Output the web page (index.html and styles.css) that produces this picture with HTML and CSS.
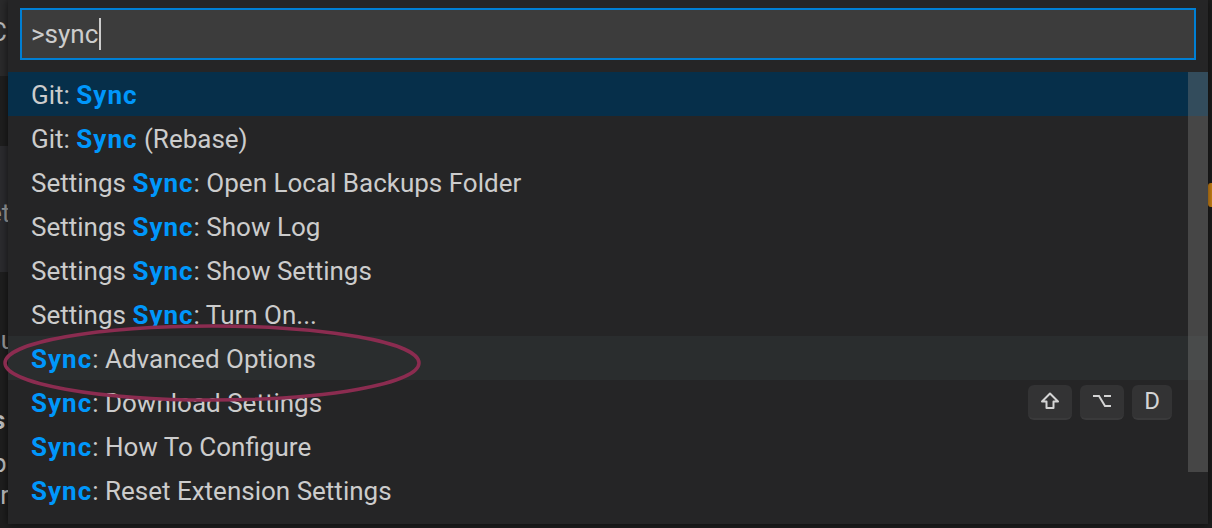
FILE: index.html
```html
<!DOCTYPE html>
<html>
<head>
<meta charset="utf-8">
<link rel="stylesheet" href="styles.css">
</head>
<body>
<div class="editor">
  <div class="side-top"></div>
  <div class="side-panel"></div>
  <div class="frag frag-c">C</div>
  <div class="frag frag-et">et</div>
  <div class="frag frag-ou">ou</div>
  <div class="frag frag-s">s</div>
  <div class="frag frag-p">p</div>
  <div class="frag frag-ir">ir</div>
  <div class="right-strip"><div class="orange"></div></div>
</div>

<div class="quick-pick">
  <div class="input-wrap">
    <div class="input"><span class="value">&gt;sync</span><span class="caret"></span></div>
  </div>
  <div class="list">
    <div class="row selected"><span>Git: <b>Sync</b></span></div>
    <div class="row"><span>Git: <b>Sync</b> (Rebase)</span></div>
    <div class="row"><span>Settings <b>Sync</b>: Open Local Backups Folder</span></div>
    <div class="row"><span>Settings <b>Sync</b>: Show Log</span></div>
    <div class="row"><span>Settings <b>Sync</b>: Show Settings</span></div>
    <div class="row"><span>Settings <b>Sync</b>: Turn On...</span></div>
    <div class="row hover"><span><b>Sync</b>: Advanced Options</span></div>
    <div class="row"><span><b>Sync</b>: Download Settings</span>
      <div class="keys"><kbd class="key"><svg width="20" height="18" viewBox="0 0 20 18"><path d="M10 1.5 L18 9.5 H13.5 V16 H6.5 V9.5 H2 Z" fill="none" stroke="#d4d4d4" stroke-width="2" stroke-linejoin="round"/></svg></kbd><kbd class="key"><svg width="20" height="14" viewBox="0 0 20 14"><path d="M1 2 H7 L13 12 H19 M12 2 H19" fill="none" stroke="#d4d4d4" stroke-width="2"/></svg></kbd><kbd class="key">D</kbd></div>
    </div>
    <div class="row"><span><b>Sync</b>: How To Configure</span></div>
    <div class="row"><span><b>Sync</b>: Reset Extension Settings</span></div>
  </div>
  <div class="scrollbar"></div>
  <svg class="annotation" width="424" height="84" viewBox="0 0 424 84"><ellipse cx="211" cy="40" rx="207" ry="37" fill="none" stroke="#8b2c50" stroke-width="3.5"/></svg>
</div>
</body>
</html>
```

FILE: styles.css
```css
* { box-sizing: border-box; }
html, body {
  margin: 0;
  padding: 0;
  width: 1212px;
  height: 528px;
  overflow: hidden;
  background: #1e1e1e;
  font-family: Roboto, "Noto Sans", sans-serif;
}
.editor {
  position: relative;
  width: 1212px;
  height: 528px;
  background: #1e1e1e;
}
.side-top {
  position: absolute;
  left: 0; top: 0;
  width: 8px; height: 76px;
  background: #2a2a2b;
}
.side-panel {
  position: absolute;
  left: 0; top: 146px;
  width: 8px; height: 126px;
  background: #2b2b2e;
}
.frag {
  position: absolute;
  left: -6px;
  color: #bdbdbd;
  font-size: 26px;
  line-height: 30px;
}
.frag-c { top: 17px; left: -10px; }
.frag-et { top: 198px; left: -12px; color: #9a9a9a; }
.frag-ou { top: 325px; left: -14px; color: #9a9a9a; }
.frag-s { top: 405px; left: -8px; font-weight: 700; }
.frag-p { top: 448px; left: -8px; }
.frag-ir { top: 480px; left: -6px; }
.right-strip {
  position: absolute;
  right: 0; top: 0;
  width: 4px; height: 528px;
  background: #1e1e1e;
}
.orange {
  position: absolute;
  left: 0; top: 183px;
  width: 4px; height: 24px;
  background: #d18616;
  border-radius: 3px 0 0 3px;
}

.quick-pick {
  position: absolute;
  left: 8px;
  top: 0;
  width: 1200px;
  height: 524px;
  background: #252526;
  box-shadow: 0 0 8px rgba(0,0,0,0.6);
}
.input-wrap {
  padding: 8px 12px 12px 12px;
}
.input {
  height: 52px;
  border: 2px solid #007fd4;
  background: #3c3c3c;
  padding-left: 9px;
  display: flex;
  align-items: center;
  color: #cccccc;
  font-size: 26px;
}
.caret {
  display: inline-block;
  width: 2px;
  height: 32px;
  background: #cccccc;
  margin-left: 1px;
}
.list {
  display: flex;
  flex-direction: column;
}
.row {
  height: 44px;
  padding-left: 23px;
  padding-right: 36px;
  padding-top: 2px;
  display: flex;
  align-items: center;
  justify-content: space-between;
  color: #cccccc;
  font-size: 26px;
  white-space: nowrap;
}
.row b {
  color: #0097fb;
  font-weight: 700;
  letter-spacing: 1px;
}
.row.selected { background: #062f4a; }
.row.hover { background: #2a2d2e; }
.keys {
  display: flex;
  gap: 8px;
  margin-top: -2px;
}
.key {
  width: 44px;
  height: 35px;
  border-radius: 6px;
  background: #333334;
  border-bottom: 2px solid #3a3a3b;
  display: flex;
  align-items: center;
  justify-content: center;
  color: #d4d4d4;
  font-family: Roboto, sans-serif;
  font-size: 24px;
}
.key:last-child { width: 40px; }
.scrollbar {
  position: absolute;
  left: 1180px;
  top: 72px;
  width: 20px;
  height: 400px;
  background: rgba(121,121,121,0.4);
}
.annotation {
  position: absolute;
  left: -7px;
  top: 323px;
}
```
